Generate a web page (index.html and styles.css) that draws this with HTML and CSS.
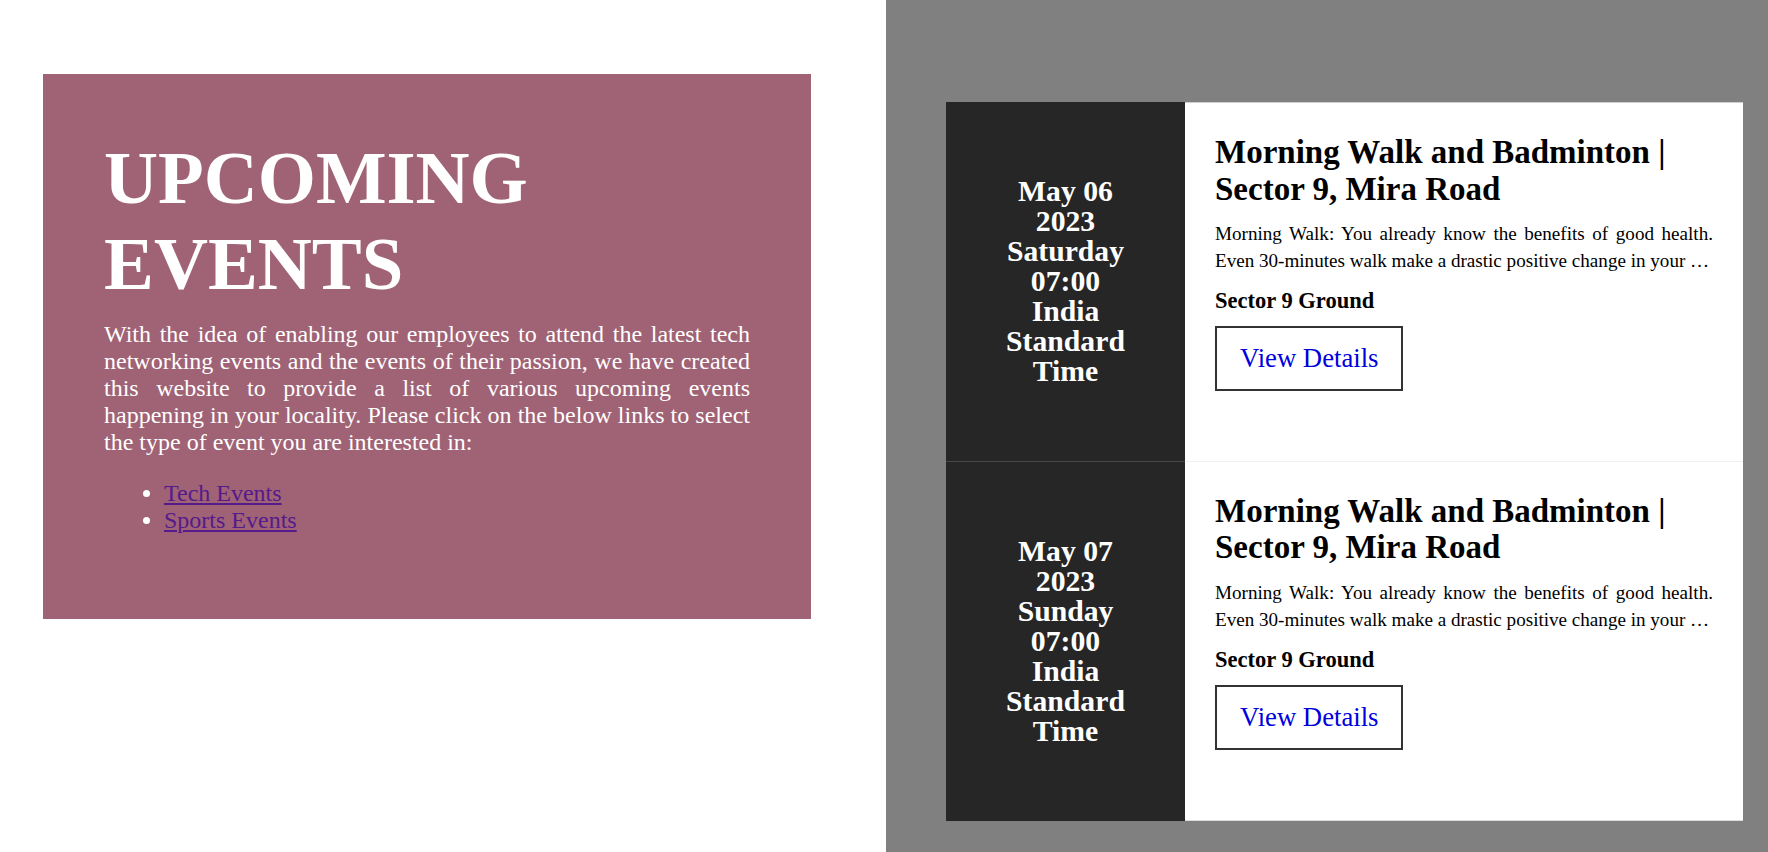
FILE: index.html
```html
<!DOCTYPE html>
<html lang="en">
<head>
<meta charset="utf-8">
<title>Upcoming Events</title>
<link rel="stylesheet" href="styles.css">
</head>
<body>
<main class="page">
  <section class="intro-col">
    <div class="intro">
      <h1 class="intro-title">UPCOMING EVENTS</h1>
      <p class="intro-text">With the idea of enabling our employees to attend the latest tech networking events and the events of their passion, we have created this website to provide a list of various upcoming events happening in your locality. Please click on the below links to select the type of event you are interested in:</p>
      <ul class="intro-links">
        <li><a href="#tech">Tech Events</a></li>
        <li><a href="#sports">Sports Events</a></li>
      </ul>
    </div>
  </section>
  <section class="events-col">
    <div class="events">
      <article class="event">
        <div class="event-date">May 06<br>2023<br>Saturday<br>07:00<br>India<br>Standard<br>Time</div>
        <div class="event-body">
          <h2 class="event-title">Morning Walk and Badminton | Sector 9, Mira Road</h2>
          <p class="event-desc">Morning Walk: You already know the benefits of good health. Even 30-minutes walk make a drastic positive change in your …</p>
          <h3 class="event-place">Sector 9 Ground</h3>
          <a class="event-btn" href="#details">View Details</a>
        </div>
      </article>
      <article class="event">
        <div class="event-date">May 07<br>2023<br>Sunday<br>07:00<br>India<br>Standard<br>Time</div>
        <div class="event-body">
          <h2 class="event-title">Morning Walk and Badminton | Sector 9, Mira Road</h2>
          <p class="event-desc">Morning Walk: You already know the benefits of good health. Even 30-minutes walk make a drastic positive change in your …</p>
          <h3 class="event-place">Sector 9 Ground</h3>
          <a class="event-btn" href="#details">View Details</a>
        </div>
      </article>
    </div>
  </section>
</main>
</body>
</html>
```

FILE: styles.css
```css
* {
  box-sizing: border-box;
}

html, body {
  margin: 0;
  padding: 0;
}

body {
  font-family: "Liberation Serif", "Times New Roman", serif;
  background: #ffffff;
}

.page {
  display: flex;
  height: 100vh;
}

.intro-col {
  width: 886px;
  flex: none;
  background: #ffffff;
  padding: 74px 75px 0 43px;
}

.intro {
  background: #a06275;
  color: #ffffff;
  padding: 61px 61px 85px 61px;
}

.intro-title {
  margin: 0 0 13.5px 0;
  font-size: 74.8px;
  font-weight: bold;
  line-height: normal;
}

.intro-text {
  margin: 0 0 24px 0;
  font-size: 24px;
  line-height: normal;
  text-align: justify;
}

.intro-links {
  margin: 0;
  padding-left: 60px;
  font-size: 24px;
  line-height: normal;
}

.intro-links a {
  color: #551a8b;
}

.events-col {
  flex: 1;
  background: #808080;
  padding: 102px 25px 31px 60px;
  display: flex;
}

.events {
  flex: 1;
  display: grid;
  grid-template-rows: 1fr 1fr;
}

.event {
  display: grid;
  grid-template-columns: 239px 1fr;
}

.event-date {
  background: #262626;
  color: #ffffff;
  font-weight: bold;
  font-size: 29.7px;
  line-height: 30px;
  text-align: center;
  display: flex;
  align-items: center;
  justify-content: center;
}

.event:first-child .event-date {
  border-bottom: 1px solid #474747;
}

.event-body {
  background: #ffffff;
  padding: 31px 30px 30px 30px;
  display: flex;
  flex-direction: column;
  align-items: flex-start;
  gap: 13.5px;
}

.event:first-child .event-body {
  border-top: 1px solid #cfcfcf;
  border-bottom: 1px solid #f0f0f0;
  padding-top: 31px;
}

.event:last-child .event-body {
  border-bottom: 1px solid #dcdcdc;
}

.event-title {
  margin: 0;
  font-size: 33px;
  line-height: 1.12;
  font-weight: bold;
  color: #000000;
}

.event-desc {
  margin: 0;
  font-size: 19.1px;
  line-height: 26.7px;
  text-align: justify;
  color: #000000;
}

.event-place {
  margin: 0 0 -1.5px 0;
  font-size: 22.5px;
  line-height: normal;
  font-weight: bold;
  color: #000000;
}

.event-btn {
  display: inline-block;
  border: 2px solid #333333;
  padding: 15px 23px;
  font-size: 26.7px;
  line-height: normal;
  color: #0000dd;
  text-decoration: none;
  background: #ffffff;
}
```
